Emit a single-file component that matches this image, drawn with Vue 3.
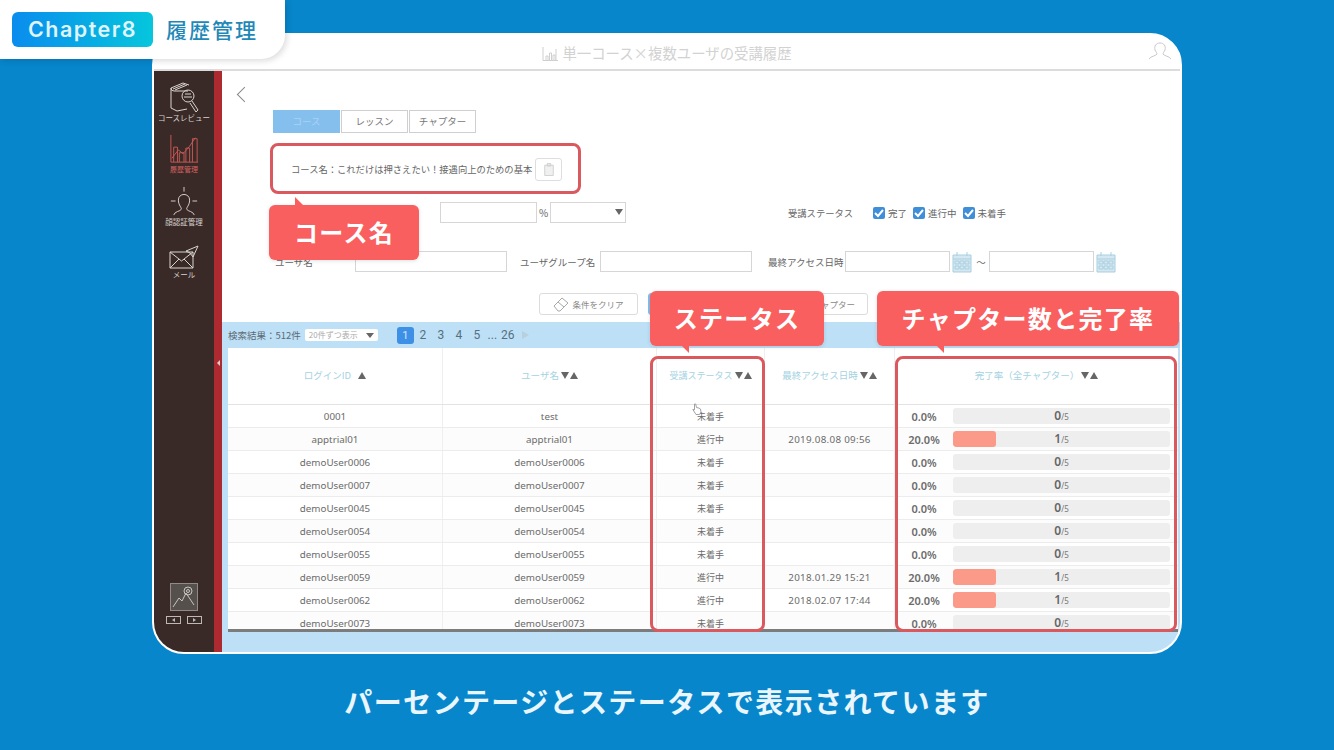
<script setup>
const rows = [
  { id: '0001', name: 'test', status: '未着手', date: '', rate: '0.0%', done: 0 },
  { id: 'apptrial01', name: 'apptrial01', status: '進行中', date: '2019.08.08 09:56', rate: '20.0%', done: 1 },
  { id: 'demoUser0006', name: 'demoUser0006', status: '未着手', date: '', rate: '0.0%', done: 0 },
  { id: 'demoUser0007', name: 'demoUser0007', status: '未着手', date: '', rate: '0.0%', done: 0 },
  { id: 'demoUser0045', name: 'demoUser0045', status: '未着手', date: '', rate: '0.0%', done: 0 },
  { id: 'demoUser0054', name: 'demoUser0054', status: '未着手', date: '', rate: '0.0%', done: 0 },
  { id: 'demoUser0055', name: 'demoUser0055', status: '未着手', date: '', rate: '0.0%', done: 0 },
  { id: 'demoUser0059', name: 'demoUser0059', status: '進行中', date: '2018.01.29 15:21', rate: '20.0%', done: 1 },
  { id: 'demoUser0062', name: 'demoUser0062', status: '進行中', date: '2018.02.07 17:44', rate: '20.0%', done: 1 },
  { id: 'demoUser0073', name: 'demoUser0073', status: '未着手', date: '', rate: '0.0%', done: 0 },
]
const pages = ['2', '3', '4', '5', '...', '26']
const statuses = ['完了', '進行中', '未着手']
</script>

<template>
  <div class="stage">
    <div class="chapter">
      <span class="chapter-badge">Chapter8</span>
      <span class="chapter-title">履歴管理</span>
    </div>

    <div class="window">
      <header class="titlebar">
        <svg class="title-icon" viewBox="0 0 16 14" width="16" height="14" fill="none" stroke="#cfcfcf" stroke-width="1">
          <path d="M1 0v13.500h15M4 13V9h2v4M7.500 13V6h2v7M11 13V8h2v5M14 13V2" />
        </svg>
        <span>単一コース×複数ユーザの受講履歴</span>
        <svg class="user-icon" viewBox="0 0 24 18" width="24" height="18" fill="none" stroke="#c8c8c8" stroke-width="1">
          <path d="M1 17c2-3 7-3 8-5 0-1-1-2-2-4C6 4 8 1 12 1s6 3 5 7c-1 2-2 3-2 4 1 2 6 2 8 5" />
        </svg>
      </header>

      <div class="body">
        <aside class="sidebar">
          <nav class="side-nav">
            <div class="side-item">
              <svg viewBox="0 0 30 30" width="30" height="30" fill="none" stroke="#d8d4d0" stroke-width="1">
                <path d="M2 6L14 1l6 2M4 7l12-5M6 8l12-5M2 6q0 3 3 3h14M2 6v20l6 3 10-2" />
                <circle cx="19" cy="14" r="6" />
                <path d="M16 12h6M15 15h8" />
                <path d="M23 19l6 9-2 2-6-9" />
              </svg>
              <span>コースレビュー</span>
            </div>
            <div class="side-item active">
              <svg viewBox="0 0 32 32" width="30" height="30" fill="none" stroke="#c85a58" stroke-width="1">
                <path d="M2 1v29h29M5 30V14h4v16M11 30V20h5v10M18 30V15h4v15M25 30V5h5v25M3 26l7-9 5 4 7-8 6-9" />
              </svg>
              <span class="small">履歴管理</span>
            </div>
            <div class="side-item">
              <svg viewBox="0 0 32 32" width="30" height="30" fill="none" stroke="#d8d4d0" stroke-width="1">
                <path d="M16 1v5M2 16h5M25 16h5M5 31c1-4 7-4 8-6 1-2-3-4-3-10 0-4 3-6 6-6s6 2 6 6c0 6-4 8-3 10 1 2 7 2 8 6" />
              </svg>
              <span>顔認証管理</span>
            </div>
            <div class="side-item mail">
              <svg viewBox="0 0 30 24" width="30" height="24" fill="none" stroke="#d8d4d0" stroke-width="1">
                <path d="M1 7h23v16H1zM1 7l11.500 9L24 7M1 23l9-9M24 23l-9-9M17 6L29 1l-5 11-3-4z" />
              </svg>
              <span>メール</span>
            </div>
          </nav>
          <div class="side-foot">
            <div class="photo">
              <svg viewBox="0 0 26 26" width="26" height="26" fill="none" stroke="#c9c5c1" stroke-width="1">
                <path d="M2 23l6-9 3 3 4-8 8 12" />
                <circle cx="17" cy="7" r="4" />
                <circle cx="17" cy="7" r="1.500" />
              </svg>
            </div>
            <div class="photo-nav">
              <span><i class="tri-left"></i></span>
              <span><i class="tri-right"></i></span>
            </div>
          </div>
        </aside>
        <div class="rail"><i></i></div>

        <main class="main">
          <div class="back"></div>
          <div class="tabs">
            <span class="tab current">コース</span>
            <span class="tab">レッスン</span>
            <span class="tab">チャプター</span>
          </div>
          <div class="course-row">
            <span>コース名：これだけは押さえたい！接遇向上のための基本</span>
            <span class="copy-btn">
              <svg viewBox="0 0 14 16" width="12" height="15" fill="#f0f0f0" stroke="#cdcdcd" stroke-width="1">
                <path d="M2 3h10v12H2zM5 1h4v3H5z" />
              </svg>
            </span>
          </div>

          <div class="filter-a">
            <div class="rate-group">
              <span class="input rate-input"></span>
              <span class="pct">%</span>
              <span class="input rate-select"><i class="tri-down"></i></span>
            </div>
            <span class="status-label">受講ステータス</span>
            <label v-for="s in statuses" :key="s" class="check">
              <span class="box">
                <svg viewBox="0 0 12 12" width="12" height="12" fill="none" stroke="#fff" stroke-width="2"><path d="M2 6l3 3 5-6" /></svg>
              </span>{{ s }}
            </label>
          </div>

          <div class="filter-b">
            <span class="lbl user-lbl">ユーザ名</span>
            <span class="input user-input"></span>
            <span class="lbl group-lbl">ユーザグループ名</span>
            <span class="input group-input"></span>
            <span class="lbl date-lbl">最終アクセス日時</span>
            <span class="input date-input"></span>
            <svg class="cal" viewBox="0 0 20 22" width="20" height="22" fill="#d5e8f2" stroke="#a9cfe0" stroke-width="1">
              <path d="M1 4h18v17H1zM5 1v4M15 1v4M1 8h18M3 10h4v3H3zM8 10h4v3H8zM13 10h4v3h-4zM3 15h4v3H3zM8 15h4v3H8zM13 15h4v3h-4z" />
            </svg>
            <span class="tilde">～</span>
            <span class="input date-input"></span>
            <svg class="cal" viewBox="0 0 20 22" width="20" height="22" fill="#d5e8f2" stroke="#a9cfe0" stroke-width="1">
              <path d="M1 4h18v17H1zM5 1v4M15 1v4M1 8h18M3 10h4v3H3zM8 10h4v3H8zM13 10h4v3h-4zM3 15h4v3H3zM8 15h4v3H8zM13 15h4v3h-4z" />
            </svg>
          </div>

          <div class="actions">
            <span class="btn clear">
              <svg viewBox="0 0 16 16" width="16" height="16" fill="none" stroke="#a8a8a8" stroke-width="1">
                <path d="M1 10l8-8 6 5-8 8H5zM5 6l6 5" />
              </svg>
              条件をクリア
            </span>
            <span class="btn search"></span>
            <span class="btn chapter-btn">チャプター</span>
          </div>

          <section class="results">
            <div class="results-bar">
              <span class="count">検索結果：512件</span>
              <span class="per-page">20件ずつ表示<i class="tri-down"></i></span>
              <div class="pager">
                <span class="page on">1</span>
                <span v-for="p in pages" :key="p" class="page" :class="{ dots: p === '...' }">{{ p }}</span>
                <i class="tri-next"></i>
              </div>
            </div>
            <div class="table">
              <div class="row head">
                <div class="cell c-id">ログインID<i class="up only"></i></div>
                <div class="cell c-name">ユーザ名<i class="down"></i><i class="up"></i></div>
                <div class="cell c-status">受講ステータス<i class="down"></i><i class="up"></i></div>
                <div class="cell c-date">最終アクセス日時<i class="down"></i><i class="up"></i></div>
                <div class="cell c-rate">完了率（全チャプター）<i class="down"></i><i class="up"></i></div>
              </div>
              <div v-for="r in rows" :key="r.id" class="row">
                <div class="cell c-id">{{ r.id }}</div>
                <div class="cell c-name">{{ r.name }}</div>
                <div class="cell c-status">{{ r.status }}</div>
                <div class="cell c-date">{{ r.date }}</div>
                <div class="cell c-rate">
                  <b class="pct-val">{{ r.rate }}</b>
                  <div class="bar">
                    <div class="bar-fill" :style="{ width: r.done * 20 + '%' }"></div>
                    <span class="bar-text"><b>{{ r.done }}</b>/5</span>
                  </div>
                </div>
              </div>
            </div>
          </section>
        </main>
      </div>

      <!-- annotations laid over the screen -->
      <div class="frame f-course"></div>
      <div class="frame f-status"></div>
      <div class="frame f-rate"></div>
      <div class="call c1">コース名</div>
      <div class="call c2">ステータス</div>
      <div class="call c3">チャプター数と完了率</div>
      <svg class="cursor" viewBox="0 0 10 12" width="10" height="12" fill="#fff" stroke="#8a8a8a" stroke-width="0.8">
        <path d="M2.500 1l1.200 0 .8 3.500 2.500.6 1.500.9.500 3-1.500 2.500H4L.8 6.500l1.700.3z" />
      </svg>
    </div>

    <p class="caption">パーセンテージとステータスで表示されています</p>
  </div>
</template>

<style>
html, body { margin: 0; background: #0786cc; }
</style>

<style scoped>
.stage {
  position: relative;
  width: 1334px;
  height: 750px;
  overflow: hidden;
  background: #0786cc;
  padding-top: 33px;
  box-sizing: border-box;
  font-family: "Noto Sans CJK JP", "Noto Sans", sans-serif;
  color: #666;
}
.chapter {
  position: absolute;
  left: 0;
  top: 0;
  z-index: 5;
  width: 285px;
  height: 59px;
  box-sizing: border-box;
  padding: 12px 0 0 12px;
  display: flex;
  gap: 13px;
  background: #fff;
  border-bottom-right-radius: 24px;
  box-shadow: 2px 2px 6px rgba(0, 0, 0, 0.14);
}
.chapter-badge {
  width: 141px;
  height: 35px;
  border-radius: 6px;
  background: linear-gradient(90deg, #0a8cee, #06c6dc);
  color: #dff4fb;
  font: 600 21.5px/35px "Inter", "Noto Sans", sans-serif;
  letter-spacing: 1.5px;
  text-align: center;
}
.chapter-title {
  color: #1f88b8;
  font-size: 21px;
  font-weight: 500;
  line-height: 34px;
  letter-spacing: 2px;
}
.window {
  position: relative;
  width: 1030px;
  height: 621px;
  margin-left: 152px;
  box-sizing: border-box;
  border: 2px solid #fff;
  border-radius: 32px;
  overflow: hidden;
  background: #fff;
  display: flex;
  flex-direction: column;
}
.titlebar {
  flex: none;
  height: 36px;
  box-sizing: border-box;
  border-bottom: 2px solid #dcdcdc;
  display: flex;
  align-items: center;
  justify-content: center;
  gap: 4px;
  color: #d2d2d2;
  font-size: 14.4px;
  position: relative;
}
.title-icon { margin-top: 3px; }
.user-icon { position: absolute; right: 8px; top: 7px; }
.body { flex: 1; display: flex; min-height: 0; }
.sidebar {
  width: 60px;
  flex: none;
  background: #3a2a27;
  display: flex;
  flex-direction: column;
  justify-content: space-between;
  padding: 11px 0 28px;
  box-sizing: border-box;
}
.side-nav { display: flex; flex-direction: column; align-items: center; gap: 11px; }
.side-item {
  display: flex;
  flex-direction: column;
  align-items: center;
  color: #d8d4d0;
  font-size: 7.5px;
  line-height: 11px;
  white-space: nowrap;
}
.side-item.active { color: #d26361; }
.side-item .small { font-size: 7px; }
.side-item.mail { margin-top: 7px; }
.side-foot { display: flex; flex-direction: column; align-items: center; gap: 5px; }
.photo {
  width: 26px;
  height: 26px;
  border: 1px solid #8f8b87;
  background: #55504c;
}
.photo-nav { display: flex; gap: 6px; }
.photo-nav span {
  width: 13px;
  height: 6px;
  border: 1px solid #bdb9b5;
  display: flex;
  align-items: center;
  justify-content: center;
}
.tri-left { border: 2px solid transparent; border-right: 3px solid #bdb9b5; border-left: 0; }
.tri-right { border: 2px solid transparent; border-left: 3px solid #bdb9b5; border-right: 0; }
.rail {
  width: 8px;
  flex: none;
  background: #ad2a30;
  display: flex;
  align-items: center;
  justify-content: center;
}
.rail i { border: 3px solid transparent; border-right: 3px solid #e7c8c8; border-left: 0; margin-top: 3px; }
.main {
  flex: 1;
  min-width: 0;
  position: relative;
  display: flex;
  flex-direction: column;
  font-size: 9.5px;
  color: #666;
}
.back {
  position: absolute;
  left: 17px;
  top: 18px;
  width: 10px;
  height: 10px;
  border-left: 1.5px solid #888;
  border-bottom: 1.5px solid #888;
  transform: rotate(45deg);
}
.tabs { display: flex; margin: 39px 0 0 51px; height: 23px; }
.tab {
  width: 67px;
  box-sizing: border-box;
  border: 1px solid #cfcfcf;
  margin-right: 1px;
  text-align: center;
  line-height: 21px;
  color: #777;
}
.tab.current { background: #85bfee; border-color: #85bfee; color: #a9d3f4; }
.course-row {
  display: flex;
  align-items: center;
  gap: 3px;
  margin: 24px 0 0 69px;
  height: 24px;
  font-size: 9.3px;
  white-space: nowrap;
}
.copy-btn {
  width: 25px;
  height: 21px;
  border: 1px solid #dedede;
  border-radius: 3px;
  display: flex;
  align-items: center;
  justify-content: center;
}
.input {
  display: block;
  box-sizing: border-box;
  border: 1px solid #d6d6d6;
  height: 21px;
  flex: none;
}
.filter-a { display: flex; align-items: center; margin-top: 21px; height: 21px; font-size: 9.5px; }
.rate-group { display: flex; align-items: center; margin-left: 218px; }
.rate-input { width: 97px; }
.pct { width: 13px; text-align: center; font-size: 10px; }
.rate-select { width: 76px; position: relative; }
.rate-select .tri-down { position: absolute; right: 2px; top: 6px; border-width: 6px 4px 0; }
.tri-down {
  display: inline-block;
  width: 0;
  border-style: solid;
  border-width: 5px 4px 0;
  border-color: #666 transparent transparent;
}
.status-label { margin-left: 162px; width: 60px; font-size: 9.3px; white-space: nowrap; }
.check { display: inline-flex; align-items: center; gap: 3px; margin-left: 2px; white-space: nowrap; }
.check:first-of-type { margin-left: 21px; }
.box {
  width: 12px;
  height: 12px;
  border-radius: 2px;
  background: #3f8ed8;
  margin-left: 4px;
}
.filter-b { display: flex; align-items: center; margin-top: 28px; height: 21px; white-space: nowrap; }
.lbl { flex: none; }
.user-lbl { margin-left: 53px; width: 80px; }
.user-input { width: 152px; }
.group-lbl { margin-left: 13px; width: 80px; }
.group-input { width: 152px; }
.date-lbl { margin-left: 16px; width: 77px; }
.date-input { width: 105px; }
.cal { margin-left: 2px; flex: none; }
.tilde { width: 16px; text-align: center; margin-left: 1px; }
.actions { display: flex; align-items: center; margin: 21px 0 0 317px; height: 22px; gap: 10px; }
.btn {
  box-sizing: border-box;
  height: 22px;
  border: 1px solid #dcdcdc;
  border-radius: 3px;
  display: inline-flex;
  align-items: center;
  justify-content: center;
  gap: 3px;
  font-size: 8.5px;
  color: #888;
  white-space: nowrap;
}
.clear { width: 99px; }
.search { width: 140px; background: #85bfee; border-color: #85bfee; }
.chapter-btn { width: 74px; margin-left: -4px; justify-content: flex-end; padding-right: 12px; }
.results {
  flex: 1;
  min-height: 0;
  margin-top: 7px;
  background: #bde0f7;
  padding: 0 2px 20px 6px;
  display: flex;
  flex-direction: column;
}
.results-bar {
  flex: none;
  height: 26px;
  display: flex;
  align-items: center;
  font-size: 9.5px;
  color: #5d6a72;
  white-space: nowrap;
}
.per-page {
  margin-left: 4px;
  width: 73px;
  height: 12px;
  box-sizing: border-box;
  background: #fff;
  border-radius: 2px;
  color: #aaa;
  font-size: 8px;
  line-height: 12px;
  padding: 0 4px;
  display: flex;
  align-items: center;
  justify-content: space-between;
}
.pager { display: flex; align-items: center; margin-left: 19px; font-size: 12px; color: #55707f; }
.page { width: 18px; flex: none; text-align: center; font-family: "Roboto", sans-serif; }
.page.dots { width: 13px; }
.page.on {
  width: 17px;
  height: 17px;
  line-height: 17px;
  font-size: 11px;
  border-radius: 3px;
  background: #3e8fe6;
  color: #cfe6fb;
}
.tri-next {
  margin-left: 5px;
  border: 4px solid transparent;
  border-left: 7px solid #b9cfdc;
  border-right: 0;
}
.table { flex: 1; min-height: 0; overflow: hidden; background: #fff; border-bottom: 3px solid #7c7c7c; }
.row {
  display: flex;
  height: 23px;
  box-sizing: border-box;
  border-bottom: 1px solid #ececec;
  font-family: "Noto Sans", "Noto Sans CJK JP", sans-serif;
  font-size: 9.8px;
  color: #6b6b6b;
}
.row:nth-child(odd) { background: #fcfcfc; }
.row.head {
  height: 57px;
  background: #fff;
  color: #a5d2e2;
  font-size: 9.5px;
  font-family: "Noto Sans CJK JP", sans-serif;
  border-bottom: 1px solid #e3e3e3;
}
.row.head .cell { padding-bottom: 2px; align-items: center; }
.cell {
  display: flex;
  align-items: center;
  justify-content: center;
  box-sizing: border-box;
  white-space: nowrap;
  border-right: 1px solid #efefef;
}
.c-id { width: 215px; }
.c-name { width: 214px; }
.c-status { width: 108px; font-size: 9px; }
.c-date { width: 130px; letter-spacing: 0.3px; }
.head .c-date { letter-spacing: 0; }
.c-rate { flex: 1; border-right: 0; }
.row:not(.head) .c-rate { justify-content: flex-start; }
.up, .down { display: inline-block; width: 0; border-style: solid; margin-left: 1px; }
.up { border-width: 0 4.5px 7px; border-color: transparent transparent #666; }
.up.only { margin-left: 7px; }
.down { border-width: 7px 4.5px 0; border-color: #666 transparent transparent; margin-left: 2px; }
.pct-val { width: 58px; flex: none; text-align: center; font-weight: 600; font-size: 11px; letter-spacing: 0; }
.bar {
  position: relative;
  width: 217px;
  height: 16px;
  border-radius: 3px;
  background: #eeeeee;
  overflow: hidden;
}
.bar-fill { height: 100%; background: #fb9a88; border-radius: 3px; }
.bar-text {
  position: absolute;
  left: 0;
  right: 0;
  top: 0;
  line-height: 16px;
  text-align: center;
  font-size: 8px;
  color: #777;
}
.bar-text b { font-size: 12px; font-weight: 600; color: #666; }
.frame {
  position: absolute;
  box-sizing: border-box;
  border: 3px solid #d9595e;
  border-radius: 8px;
}
.f-course { left: 116px; top: 108px; width: 311px; height: 51px; }
.f-status { left: 496px; top: 321px; width: 115px; height: 276px; }
.f-rate { left: 741px; top: 321px; width: 282px; height: 276px; }
.call {
  position: absolute;
  box-sizing: border-box;
  height: 55px;
  background: #f95f5f;
  border-radius: 6px;
  color: #fff;
  font-size: 24px;
  font-weight: 700;
  line-height: 53px;
  text-align: center;
  letter-spacing: 1.3px;
  white-space: nowrap;
  box-shadow: 0 1px 4px rgba(0, 0, 0, 0.12);
}
.call::before {
  content: "";
  position: absolute;
  top: -8px;
  left: 26px;
  border-left: 0 solid transparent;
  border-right: 8px solid transparent;
  border-bottom: 8px solid #f95f5f;
}
.c2::before, .c3::before {
  top: auto;
  bottom: -7px;
  left: 32px;
  border-bottom: 0;
  border-left: 7px solid transparent;
  border-right: 0;
  border-top: 7px solid #f95f5f;
}
.c3::before { left: 60px; }
.c1 { left: 115px; top: 170px; width: 150px; }
.c2 { left: 496px; top: 256px; width: 174px; }
.c3 { left: 723px; top: 256px; width: 302px; }
.cursor { position: absolute; left: 538px; top: 368px; }
.caption {
  margin: 0;
  position: absolute;
  left: 0;
  right: 0;
  top: 682px;
  text-align: center;
  color: #eaf6fc;
  font-size: 28px;
  font-weight: 700;
  line-height: 38px;
  letter-spacing: 1.4px;
}
</style>
